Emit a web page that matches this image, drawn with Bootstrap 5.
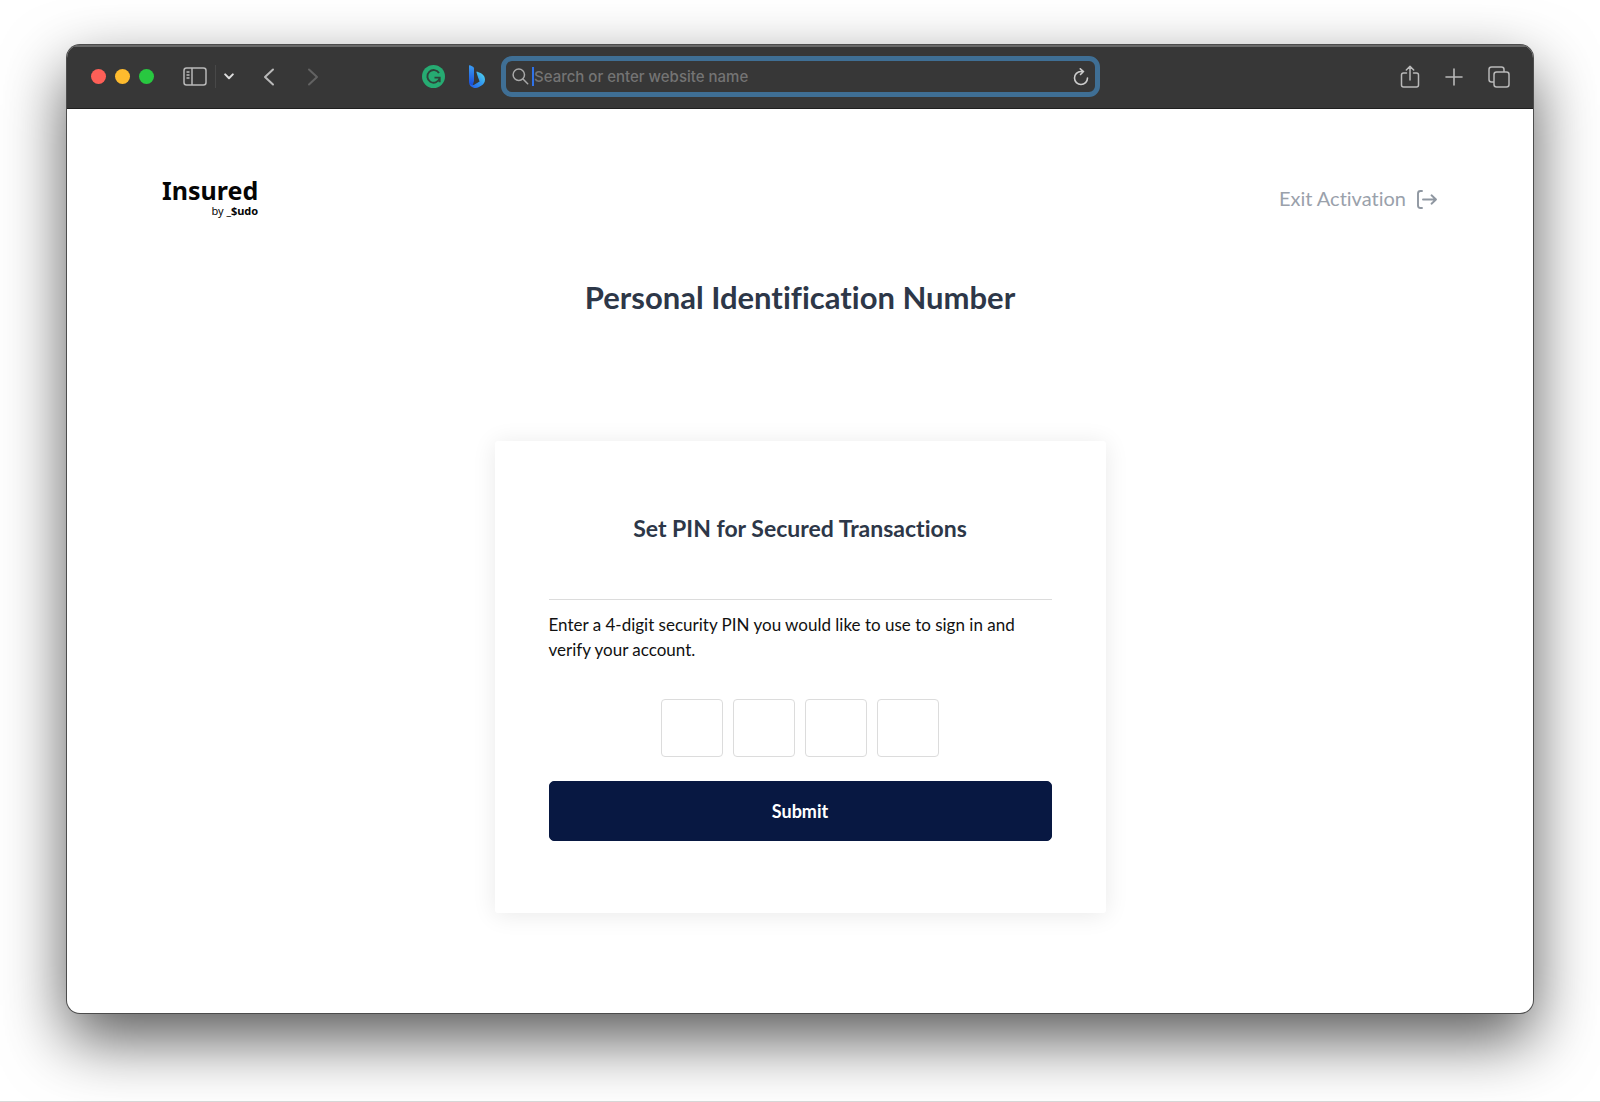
<!DOCTYPE html>
<html lang="en">
<head>
<meta charset="utf-8">
<meta name="viewport" content="width=device-width, initial-scale=1">
<title>Personal Identification Number</title>
<link href="https://cdn.jsdelivr.net/npm/bootstrap@5.3.0/dist/css/bootstrap.min.css" rel="stylesheet">
<style>
  body { font-family: Lato, sans-serif; font-variant-ligatures: none; color: #111; background: #fff; }
  svg { display: block; flex: none; }
  .desktop { padding: 45px 67px 88px; border-bottom: 1px solid #d9d9d9; }
  .app-window { border-radius: 13px; background: #fff; box-shadow: 0 0 0 1px #4c4c4c, 0 26px 64px rgba(0,0,0,.66); }
  .titlebar { height: 64px; background: #373737; border-top: 2px solid #686868; border-bottom: 1px solid #1f1f1f; color: #b9b9b9; padding: 0 23px 2px 24px; }
  .bar-side { flex: 1 1 0; }
  .tool { background: none; border: 0; padding: 0; color: inherit; }
  .lights { gap: 9px; margin-right: 29px; }
  .bar-actions { gap: 25px; }
  .light { width: 15px; height: 15px; border-radius: 50%; border: 0; padding: 0; }
  .light-close { background: #fe5f57; }
  .light-min { background: #febb2e; }
  .light-max { background: #28c840; }
  .tool-rule { width: 1px; height: 23px; background: #484848; }
  .address { width: 599px; height: 41px; border: 5px solid #3f6f95; border-radius: 11px; padding: 0 6px; background: #373737; }
  .address input { background: none; border: 0; outline: 0; min-width: 0; padding: 0; color: #ddd; font: 500 15px/20px Inter, sans-serif; }
  .address input::placeholder { color: #747474; opacity: 1; }
  .caret { width: 2px; height: 19px; background: #2f72e8; margin-left: 3px; }
  .site-header { padding: 67px 95px 0; }
  .brand { font-family: "Noto Sans", sans-serif; color: #050505; text-align: right; }
  .brand-name { font-size: 25px; line-height: 28px; font-weight: 700; }
  .brand-by { font-size: 11px; line-height: 14px; }
  .exit-link { font-size: 20px; line-height: 24px; color: #9aa1ab; margin-top: 10px; }
  .page-title { font-size: 31px; line-height: 36px; font-weight: 700; color: #2d3748; margin: 61px 0 126px; }
  .pin-card { width: 611px; max-width: 100%; border-radius: 3px; padding: 72px 54px; background: #fff; box-shadow: 0 2px 24px rgba(0,0,0,.09); }
  .pin-card h2 { font-size: 23px; line-height: 30px; font-weight: 700; color: #2d3748; margin: 0 0 56px; }
  .pin-note { border-top: 1px solid #dcdcdc; padding-top: 12px; margin: 0 0 37px; font-size: 17px; line-height: 25px; }
  .pin-digit { width: 62px; height: 58px; border: 1px solid #dcdcdc; border-radius: 4px; text-align: center; font-size: 22px; background: #fff; }
  .pin-boxes { gap: 10px; margin-bottom: 24px; }
  .btn-pin { --bs-btn-bg: #081842; --bs-btn-color: #fff; --bs-btn-border-color: #081842; --bs-btn-hover-bg: #12265c; --bs-btn-hover-color: #fff; height: 60px; border-radius: 5px; font-size: 18px; font-weight: 700; }
</style>
<script src="https://cdn.jsdelivr.net/npm/bootstrap@5.3.0/dist/js/bootstrap.bundle.min.js"></script>
</head>
<body>
<div class="desktop d-flex min-vh-100">
  <div class="app-window flex-grow-1 overflow-hidden">
    <div class="titlebar d-flex align-items-center">
      <div class="bar-side d-flex align-items-center">
        <div class="lights d-flex">
          <button class="light light-close" aria-label="Close"></button>
          <button class="light light-min" aria-label="Minimise"></button>
          <button class="light light-max" aria-label="Zoom"></button>
        </div>
        <div class="d-flex align-items-center">
          <button class="tool" aria-label="Sidebar"><svg width="24" height="19" viewBox="0 0 24 19" fill="none" stroke="currentColor" stroke-width="1.5"><rect x="1" y="1" width="22" height="17" rx="2.5"/><path d="M9 1v17M3.5 5h3M3.5 8h3M3.5 11h3"/></svg></button>
          <span class="tool-rule mx-2"></span>
          <button class="tool" aria-label="Tab groups"><svg width="10" height="7" viewBox="0 0 10 7" fill="none" stroke="#ddd" stroke-width="2" stroke-linecap="round" stroke-linejoin="round"><path d="M1.2 1.4 5 5.2l3.8-3.8"/></svg></button>
        </div>
        <div class="d-flex ms-4">
          <button class="tool ms-1 me-4" aria-label="Back"><svg width="13" height="18" viewBox="0 0 13 18" fill="none" stroke="currentColor" stroke-width="2" stroke-linecap="round" stroke-linejoin="round"><path d="M11 1.5 3 9l8 7.5"/></svg></button>
          <button class="tool ms-2" aria-label="Forward" disabled><svg width="13" height="18" viewBox="0 0 13 18" fill="none" stroke="#626262" stroke-width="2" stroke-linecap="round" stroke-linejoin="round"><path d="m2 1.5 8 7.5-8 7.5"/></svg></button>
        </div>
        <div class="d-flex align-items-center ms-auto me-3">
          <button class="tool me-4" aria-label="Grammar checker"><svg width="23" height="23" viewBox="0 0 23 23"><circle cx="11.500" cy="11.500" r="11.500" fill="#26ab72"/><path d="M17 8A6.300 6.300 0 1 0 17.600 13.500M12.500 12.600h5.200v4.600" fill="none" stroke="#2d443a" stroke-width="1.900"/></svg></button>
          <button class="tool" aria-label="Bing"><svg width="16" height="23" viewBox="0 0 16 23"><defs><linearGradient id="bstem" x2="0" y2="1"><stop stop-color="#3b9df3"/><stop offset="1" stop-color="#1748d8"/></linearGradient><linearGradient id="bbowl" x1="1" y1="0" x2="0" y2="1"><stop stop-color="#55dcea"/><stop offset=".5" stop-color="#3197f0"/><stop offset="1" stop-color="#2459e4"/></linearGradient></defs><path d="M0 .8Q0 0 1 .3l3 1.400Q5 2.200 5 3.500V16l-1.500 5Q0 20.500 0 17Z" fill="url(#bstem)"/><path d="M7.500 7.500q-.5-1.300 1-.8C13 8.300 16 10.500 16 14.500c0 3-1.300 4.600-3.500 6L9.500 22.300C6 24 1 22 .6 18.700q2.200 2.400 5 .8l5-3.100-1.500-3.800Z" fill="url(#bbowl)"/></svg></button>
        </div>
      </div>
      <label class="address d-flex align-items-center">
        <svg width="17" height="17" viewBox="0 0 17 17" fill="none" stroke="#a8a8a8" stroke-width="1.500" stroke-linecap="round"><circle cx="6.800" cy="6.800" r="5.700"/><path d="m11 11 4.700 4.700"/></svg>
        <span class="caret"></span>
        <input class="flex-grow-1" type="text" aria-label="Address" placeholder="Search or enter website name">
        <button class="tool" aria-label="Reload"><svg width="16" height="18" viewBox="0 0 16 18" fill="none" stroke="#ccc" stroke-width="1.600" stroke-linecap="round" stroke-linejoin="round"><path d="M14.500 10A6.500 6.500 0 1 1 8 3.500h2.500M7.300.8l3.200 2.700-3 3"/></svg></button>
      </label>
      <div class="bar-side bar-actions d-flex align-items-center justify-content-end">
        <button class="tool" aria-label="Share"><svg width="20" height="24" viewBox="0 0 20 24" fill="none" stroke="currentColor" stroke-width="1.500" stroke-linecap="round" stroke-linejoin="round"><path d="M6.500 8H3.500Q1.500 8 1.500 10v10q0 2 2 2h13q2 0 2-2V10q0-2-2-2h-3M10 15V1.500M6.300 5 10 1.300 13.700 5"/></svg></button>
        <button class="tool" aria-label="New tab"><svg width="18" height="18" viewBox="0 0 18 18" stroke="currentColor" stroke-width="1.600" stroke-linecap="round"><path d="M9 1v16M1 9h16"/></svg></button>
        <button class="tool" aria-label="Tab overview"><svg width="22" height="22" viewBox="0 0 22 22" fill="none" stroke="currentColor" stroke-width="1.500"><path d="M6 16H3.500Q1 16 1 13.500v-10Q1 1 3.500 1h10Q16 1 16 3.500V6"/><rect x="6" y="6" width="15" height="15" rx="2.500"/></svg></button>
      </div>
    </div>

    <header class="site-header d-flex justify-content-between align-items-start">
      <div class="brand">
        <div class="brand-name">Insured</div>
        <div class="brand-by">by <b>_$udo</b></div>
      </div>
      <a href="#" class="exit-link d-flex align-items-center text-decoration-none">Exit Activation
        <svg class="ms-2" width="24" height="24" viewBox="0 0 24 24" fill="none" stroke="#8f97a1" stroke-width="1.900" stroke-linecap="round" stroke-linejoin="round"><path d="M8 5H6.500Q4 5 4 7.500v12Q4 22 6.500 22H8M9 13.500H22M17.500 9.300l4.500 4.200-4.500 4.200"/></svg></a>
    </header>
    <main class="d-flex flex-column align-items-center">
      <h1 class="page-title text-center">Personal Identification Number</h1>
      <form class="pin-card">
        <h2 class="text-center">Set PIN for Secured Transactions</h2>
        <p class="pin-note">Enter a 4-digit security PIN you would like to use to sign in and verify your account.</p>
        <div class="pin-boxes d-flex justify-content-center">
          <input class="pin-digit" type="password" inputmode="numeric" maxlength="1" aria-label="Digit 1">
          <input class="pin-digit" type="password" inputmode="numeric" maxlength="1" aria-label="Digit 2">
          <input class="pin-digit" type="password" inputmode="numeric" maxlength="1" aria-label="Digit 3">
          <input class="pin-digit" type="password" inputmode="numeric" maxlength="1" aria-label="Digit 4">
        </div>
        <button class="btn btn-pin w-100" type="submit">Submit</button>
      </form>
    </main>
  </div>
</div>
</body>
</html>
